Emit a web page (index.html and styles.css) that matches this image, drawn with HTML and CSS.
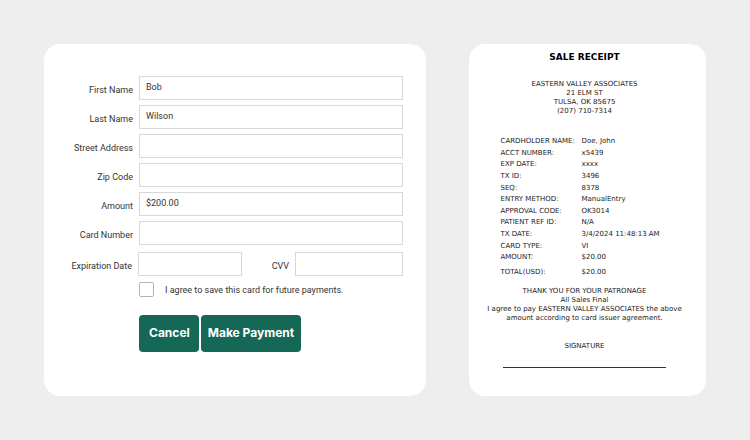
FILE: index.html
```
<!DOCTYPE html>
<html lang="en">
<head>
<meta charset="utf-8">
<meta name="viewport" content="width=device-width, initial-scale=1">
<title>Card Payment</title>
<link rel="stylesheet" href="styles.css">
</head>
<body>
<main class="layout">
  <form class="card payment">
    <div class="row"><label for="first">First Name</label><input class="field" id="first" type="text" value="Bob"></div>
    <div class="row"><label for="last">Last Name</label><input class="field" id="last" type="text" value="Wilson"></div>
    <div class="row"><label for="street">Street Address</label><input class="field" id="street" type="text"></div>
    <div class="row"><label for="zip">Zip Code</label><input class="field" id="zip" type="text"></div>
    <div class="row"><label for="amount">Amount</label><input class="field" id="amount" type="text" value="$200.00"></div>
    <div class="row"><label for="number">Card Number</label><input class="field" id="number" type="text"></div>
    <div class="row row-split">
      <label for="expiry">Expiration Date</label><input class="field" id="expiry" type="text">
      <label for="cvv">CVV</label><input class="field" id="cvv" type="text">
    </div>
    <div class="agree">
      <input class="tick" id="save" type="checkbox">
      <label for="save">I agree to save this card for future payments.</label>
    </div>
    <div class="actions">
      <button class="button button-cancel" type="button">Cancel</button>
      <button class="button" type="submit">Make Payment</button>
    </div>
  </form>
  <section class="card receipt">
    <h1>SALE RECEIPT</h1>
    <address>EASTERN VALLEY ASSOCIATES<br>21 ELM ST<br>TULSA, OK 85675<br>(207) 710-7314</address>
    <table class="details">
      <tbody>
        <tr><th scope="row">CARDHOLDER NAME:</th><td>Doe, John</td></tr>
        <tr><th scope="row">ACCT NUMBER:</th><td>x5439</td></tr>
        <tr><th scope="row">EXP DATE:</th><td>xxxx</td></tr>
        <tr><th scope="row">TX ID:</th><td>3496</td></tr>
        <tr><th scope="row">SEQ:</th><td>8378</td></tr>
        <tr><th scope="row">ENTRY METHOD:</th><td>ManualEntry</td></tr>
        <tr><th scope="row">APPROVAL CODE:</th><td>OK3014</td></tr>
        <tr><th scope="row">PATIENT REF ID:</th><td>N/A</td></tr>
        <tr><th scope="row">TX DATE:</th><td>3/4/2024 11:48:13 AM</td></tr>
        <tr><th scope="row">CARD TYPE:</th><td>VI</td></tr>
        <tr><th scope="row">AMOUNT:</th><td>$20.00</td></tr>
        <tr class="total"><th scope="row">TOTAL(USD):</th><td>$20.00</td></tr>
      </tbody>
    </table>
    <p class="terms">THANK YOU FOR YOUR PATRONAGE<br>All Sales Final<br>I agree to pay EASTERN VALLEY ASSOCIATES the above<br>amount according to card issuer agreement.</p>
    <p class="signature">SIGNATURE</p>
  </section>
</main>
</body>
</html>
```
FILE: styles.css
```
* {
  box-sizing: border-box;
}

body {
  margin: 0;
  background: #eeeeee;
  color: #333333;
  font-family: Roboto, "Liberation Sans", sans-serif;
  font-size: 9px;
}

.layout {
  display: grid;
  grid-template-columns: 382fr 237fr;
  gap: 43px;
  padding: 44px;
}

.card {
  background: #ffffff;
  border-radius: 16px;
}

/* Payment form */
.payment {
  display: flex;
  flex-direction: column;
  gap: 5px;
  padding: 32px 23px 44px;
}

.row {
  display: grid;
  grid-template-columns: 66px 1fr;
  column-gap: 6px;
  align-items: center;
}

.row label {
  padding-top: 4px;
  line-height: 12px;
  text-align: right;
  white-space: nowrap;
}

.row-split {
  grid-template-columns: 65px 104px 41px 1fr;
  margin-top: 2px;
}

.field {
  width: 100%;
  height: 24px;
  padding: 0 6px 2px;
  border: 1px solid #d8d8d8;
  border-radius: 0;
  background: #ffffff;
  color: #333333;
  font: inherit;
}

.agree {
  display: flex;
  align-items: center;
  gap: 11px;
  margin-top: 1px;
  padding-left: 72px;
}

.tick {
  appearance: none;
  width: 15px;
  height: 15px;
  margin: 0;
  border: 1px solid #b4b4b4;
  border-radius: 2px;
  background: #ffffff;
}

.tick:checked {
  background: #146855;
}

.actions {
  display: flex;
  gap: 2px;
  margin-top: 13px;
  padding-left: 72px;
}

.button {
  height: 37px;
  padding: 0 7px 2px;
  border: 0;
  border-radius: 4px;
  background: #146855;
  color: #ffffff;
  font: 700 12px Inter, "Liberation Sans", sans-serif;
}

.button-cancel {
  padding: 0 9px 2px 10px;
}

/* Printed receipt */
.receipt {
  display: flex;
  flex-direction: column;
  align-items: center;
  padding: 7px 14px 27px 8px;
  color: #222222;
  font-family: Verdana, "DejaVu Sans", sans-serif;
  font-size: 7px;
  line-height: 9px;
  text-align: center;
}

.receipt h1 {
  margin: 0;
  color: #000000;
  font-size: 9px;
  line-height: 12px;
  white-space: nowrap;
}

.receipt address {
  margin-top: 17px;
  font-style: normal;
}

.details {
  width: 168px;
  height: 143px;
  margin-top: 20px;
  border-collapse: collapse;
  text-align: left;
}

.details th,
.details td {
  padding: 0;
  font-weight: normal;
  white-space: nowrap;
}

.details th {
  width: 81px;
}

.details .total th,
.details .total td {
  padding-top: 3px;
}

.terms {
  margin: 8px 0 0;
  white-space: nowrap;
}

.signature {
  width: 163px;
  margin: 19px 0 0;
  padding-bottom: 16px;
  border-bottom: 1px solid #333333;
}
```
